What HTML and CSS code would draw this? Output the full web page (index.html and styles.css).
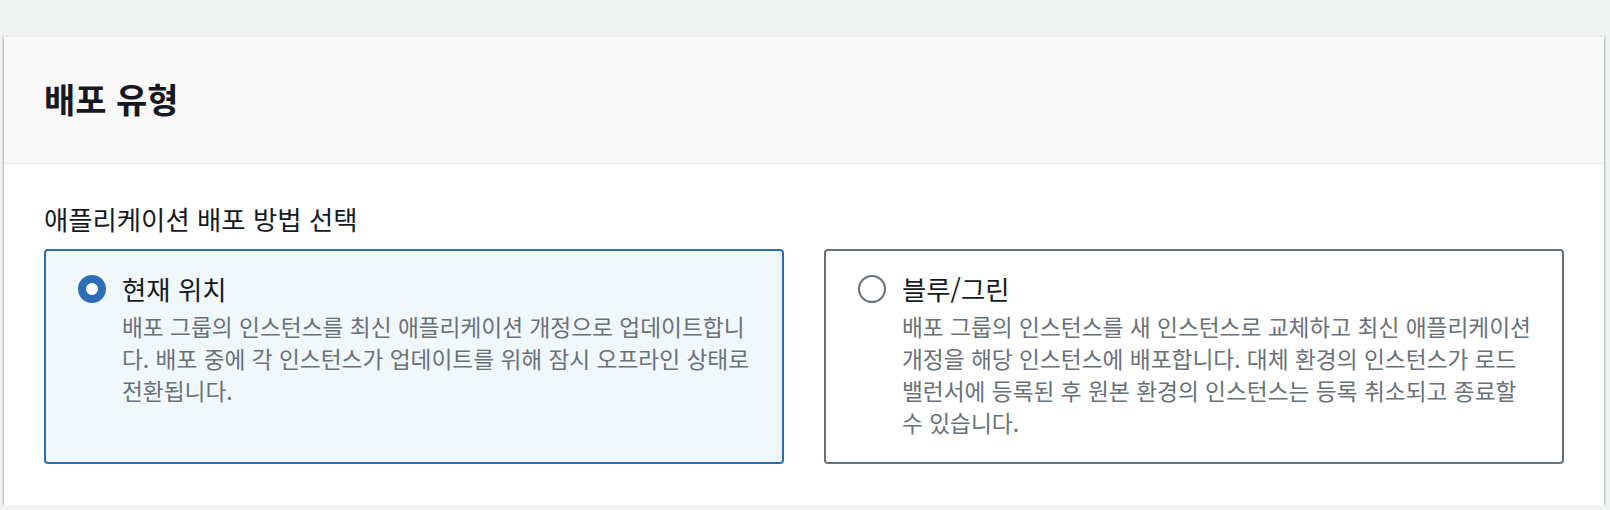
FILE: index.html
```html
<!DOCTYPE html>
<html lang="ko">
<head>
<meta charset="utf-8">
<title>배포 유형</title>
<link rel="stylesheet" href="styles.css">
</head>
<body>
<section class="panel">
  <header class="panel-header">
    <h2 class="panel-title">배포 유형</h2>
  </header>
  <div class="panel-body">
    <div class="field-label">애플리케이션 배포 방법 선택</div>
    <div class="tiles">
      <label class="tile tile-selected">
        <input class="radio" type="radio" name="deploy" checked>
        <span class="tile-title">현재 위치</span>
        <span class="tile-desc">배포 그룹의 인스턴스를 최신 애플리케이션 개정으로 업데이트합니다. 배포 중에 각 인스턴스가 업데이트를 위해 잠시 오프라인 상태로 전환됩니다.</span>
      </label>
      <label class="tile">
        <input class="radio" type="radio" name="deploy">
        <span class="tile-title">블루/그린</span>
        <span class="tile-desc tile-desc-keep">배포 그룹의 인스턴스를 새 인스턴스로 교체하고 최신 애플리케이션 개정을 해당 인스턴스에 배포합니다. 대체 환경의 인스턴스가 로드 밸런서에 등록된 후 원본 환경의 인스턴스는 등록 취소되고 종료할 수 있습니다.</span>
      </label>
    </div>
  </div>
</section>
</body>
</html>
```
FILE: styles.css
```css
html, body {
  margin: 0;
  padding: 0;
  background: #f2f3f3;
}

body {
  font-family: "Noto Sans CJK KR", "Noto Sans", sans-serif;
  color: #16191f;
  padding-top: 36px;
  padding-left: 4px;
}

.panel {
  width: 1600px;
  background: #ffffff;
  box-shadow: 0 1px 2px rgba(0, 28, 36, 0.3), 1px 1px 2px rgba(0, 28, 36, 0.15), -1px 1px 2px rgba(0, 28, 36, 0.15);
}

.panel-header {
  background: #fafafa;
  border-top: 1px solid #eaeded;
  border-bottom: 1px solid #eaeded;
  padding: 42px 40px 44px;
}

.panel-title {
  margin: 0;
  font-size: 34px;
  line-height: 40px;
  font-weight: 700;
  color: #16191f;
}

.panel-body {
  padding: 40px 40px 41px;
}

.field-label {
  font-size: 26.4px;
  line-height: 30px;
  color: #16191f;
  margin-bottom: 15px;
}

.tiles {
  display: grid;
  grid-template-columns: 1fr 1fr;
  column-gap: 40px;
}

.tile {
  display: grid;
  grid-template-columns: 28px 1fr;
  column-gap: 16px;
  align-content: start;
  border: 2px solid #687078;
  border-radius: 4px;
  background: #ffffff;
  padding: 22px 28px 23px 32px;
  cursor: pointer;
}

.tile-selected {
  border-color: #2d6fb7;
  background: #f1f8fc;
}

.radio {
  appearance: none;
  -webkit-appearance: none;
  box-sizing: border-box;
  width: 28px;
  height: 28px;
  margin: 0;
  border-radius: 50%;
  border: 2px solid #687078;
  background: #ffffff;
  align-self: center;
  grid-column: 1;
  grid-row: 1;
}

.radio:checked {
  border: 8px solid #2d6fb7;
}

.tile-title {
  grid-column: 2;
  grid-row: 1;
  font-size: 26.4px;
  line-height: 32px;
  color: #16191f;
}

.tile-desc {
  grid-column: 2;
  grid-row: 2;
  margin-top: 6px;
  font-size: 22.7px;
  line-height: 32px;
  color: #687078;
}

.tile-desc-keep {
  word-break: keep-all;
}
```
